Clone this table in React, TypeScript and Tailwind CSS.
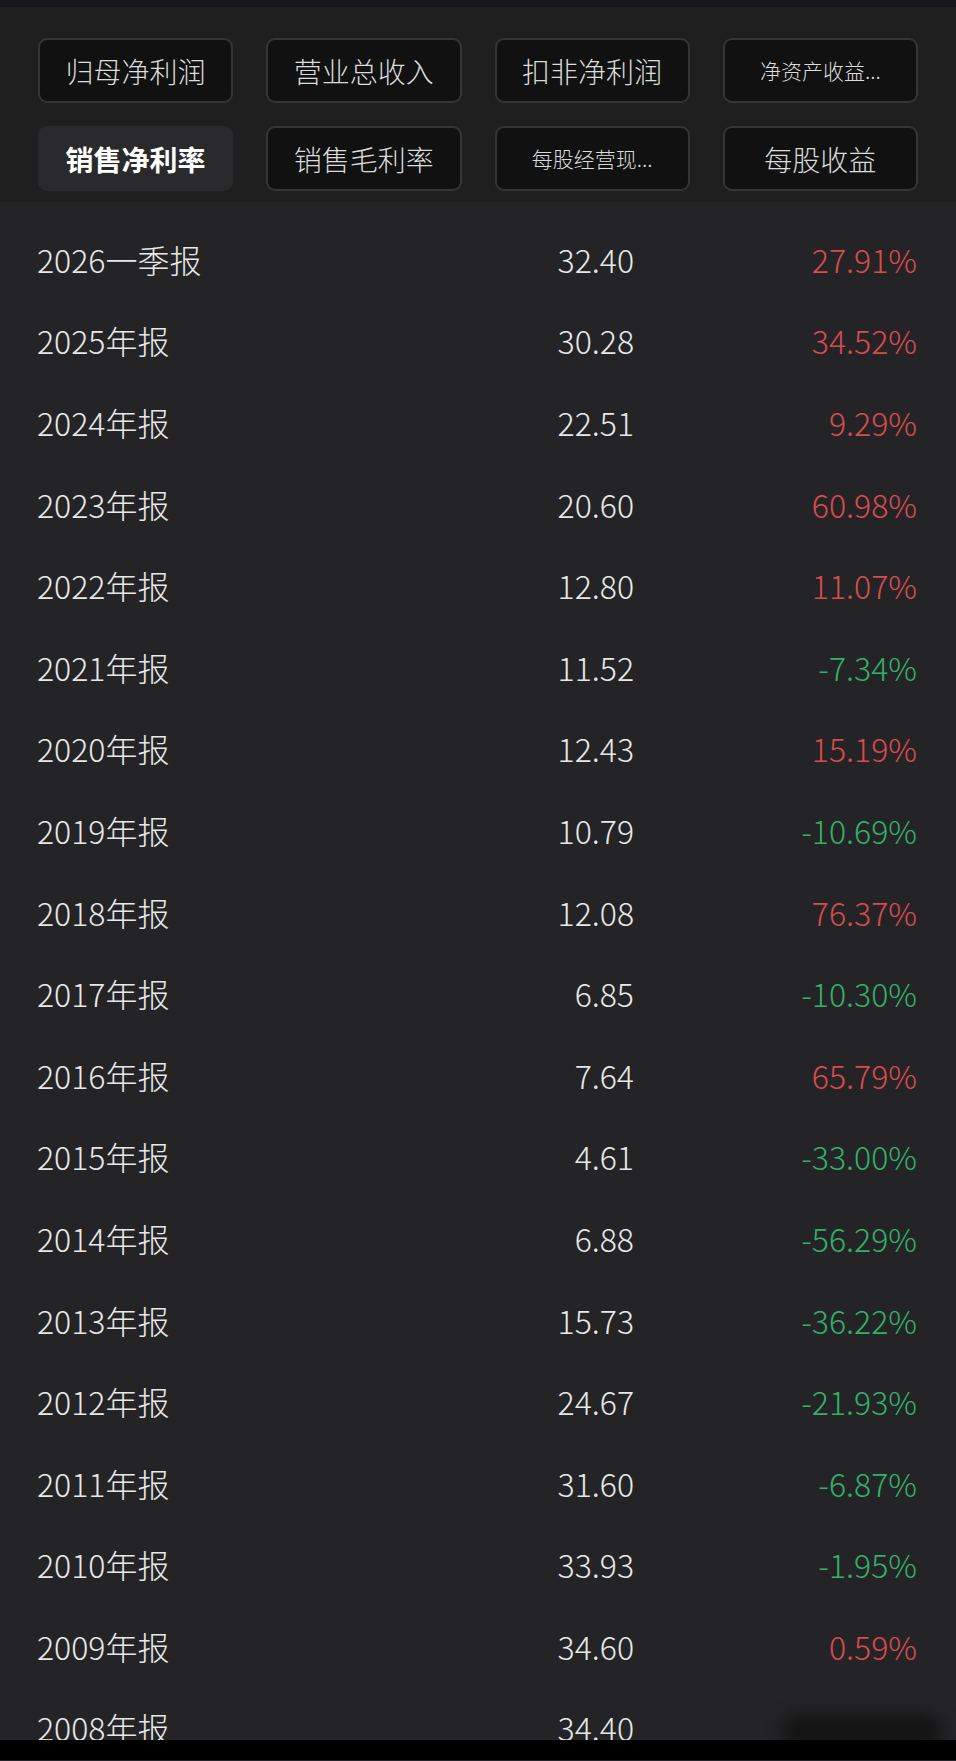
import React from "react";

const TABS = [
  { label: "归母净利润", small: false },
  { label: "营业总收入", small: false },
  { label: "扣非净利润", small: false },
  { label: "净资产收益...", small: true },
  { label: "销售净利率", small: false, active: true },
  { label: "销售毛利率", small: false },
  { label: "每股经营现...", small: true },
  { label: "每股收益", small: false },
];

const ROWS: [string, string, string][] = [
  ["2026一季报", "32.40", "27.91%"],
  ["2025年报", "30.28", "34.52%"],
  ["2024年报", "22.51", "9.29%"],
  ["2023年报", "20.60", "60.98%"],
  ["2022年报", "12.80", "11.07%"],
  ["2021年报", "11.52", "-7.34%"],
  ["2020年报", "12.43", "15.19%"],
  ["2019年报", "10.79", "-10.69%"],
  ["2018年报", "12.08", "76.37%"],
  ["2017年报", "6.85", "-10.30%"],
  ["2016年报", "7.64", "65.79%"],
  ["2015年报", "4.61", "-33.00%"],
  ["2014年报", "6.88", "-56.29%"],
  ["2013年报", "15.73", "-36.22%"],
  ["2012年报", "24.67", "-21.93%"],
  ["2011年报", "31.60", "-6.87%"],
  ["2010年报", "33.93", "-1.95%"],
  ["2009年报", "34.60", "0.59%"],
  ["2008年报", "34.40", ""],
];

const font = {
  fontFamily: '"Noto Sans CJK SC", "Noto Sans", sans-serif',
};

export default function App() {
  return (
    <div className="w-[956px] h-[1761px] bg-[#242427] flex flex-col" style={font}>
      {/* header tabs */}
      <div className="bg-[#1f1f20]">
        <div className="h-[7px] bg-[#18181c]" />
        <div className="grid grid-cols-4 gap-x-[33px] gap-y-[23px] px-[38px] pt-[31px] pb-[11px]">
          {TABS.map((t) => (
            <div
              key={t.label}
              className={`h-[65px] rounded-[9px] flex items-center justify-center ${
                t.active
                  ? "bg-[#2a2a2c] text-white font-bold text-[28px]"
                  : `bg-[#111112] border-2 border-[#353537] text-[#dcdcdc] font-light ${
                      t.small ? "text-[21px]" : "text-[28px]"
                    }`
              }`}
            >
              {t.label}
            </div>
          ))}
        </div>
      </div>

      {/* data rows */}
      <div className="h-[1538px] overflow-hidden pt-[16px] relative">
        {ROWS.map(([label, val, pct]) => {
          const neg = pct.startsWith("-");
          return (
            <div
              key={label}
              className="h-[81.6px] flex items-center pl-[37px] pr-[39px] text-[32px] font-light text-[#e8e8e8]"
            >
              <div className="flex-1">{label}</div>
              <div className="w-[200px] text-right">{val}</div>
              <div
                className={`w-[283px] text-right ${
                  neg ? "text-[#33b06a]" : "text-[#d94c4e]"
                }`}
              >
                {pct}
              </div>
            </div>
          );
        })}
        <div className="absolute right-[14px] bottom-[-8px] w-[160px] h-[34px] rounded-full bg-[#141414] blur-[8px]" />
      </div>

      <div className="h-[20px] bg-black" />
    </div>
  );
}
